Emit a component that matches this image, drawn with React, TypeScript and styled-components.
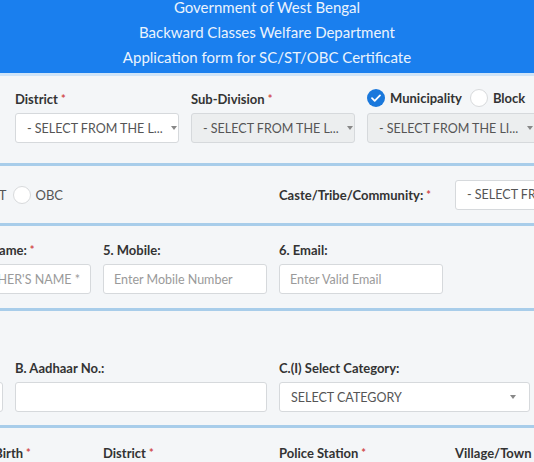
import React from "react";
import styled, { createGlobalStyle } from "styled-components";

const GlobalStyle = createGlobalStyle`
    html, body {
        margin: 0;
        padding: 0;
        background: #f4f6f8;
        font-family: "Lato", "Open Sans", sans-serif;
        overflow: hidden;
    }
`;

const Page = styled.div`
    width: 534px;
    height: 462px;
    overflow: hidden;
    background: #f4f6f8;
`;

const Header = styled.header`
    height: 78px;
    margin-top: -5px;
    background: #1a7fee;
    border-bottom: 3px solid #cfe4f8;
    color: #eaf3fd;
    text-align: center;
    font-size: 15px;
    line-height: 25px;
`;

const Section = styled.section<{ $height: number }>`
    height: ${({ $height }) => $height}px;
    border-bottom: 3px solid #a8cdea;
    box-sizing: border-box;
`;

const Grid = styled.div<{ $top: number; $center?: boolean }>`
    display: grid;
    grid-template-columns: repeat(8, 76px);
    column-gap: 12px;
    margin-left: -73px;
    padding-top: ${({ $top }) => $top}px;
    align-items: ${({ $center }) => ($center ? "center" : "end")};
    height: ${({ $center }) => ($center ? "100%" : "auto")};
    box-sizing: border-box;
`;

const Field = styled.div<{ $span?: number; $col?: number; $end?: boolean }>`
    grid-column: ${({ $col, $span = 2 }) => ($col ? `${$col} / span ${$span}` : `span ${$span}`)};
    display: flex;
    flex-direction: column;
    align-items: ${({ $end }) => ($end ? "flex-end" : "stretch")};
    gap: 6px;
    min-width: 0;
`;

const Label = styled.label`
    font-size: 13px;
    font-weight: 700;
    color: #333;
    line-height: 16px;
    white-space: nowrap;
    display: flex;
    align-items: center;
    gap: 3px;
`;

const Star = styled.span`
    color: #d24b4b;
    font-size: 11px;
`;

const Select = styled.div<{ $disabled?: boolean; $width?: number }>`
    height: 30px;
    width: ${({ $width }) => ($width ? `${$width}px` : "auto")};
    box-sizing: border-box;
    border: 1px solid #d6d9dc;
    border-radius: 3px;
    background: ${({ $disabled }) => ($disabled ? "#eceeef" : "#fff")};
    display: flex;
    align-items: center;
    justify-content: space-between;
    padding: 0 13px 0 11px;
    font-size: 12.5px;
    color: #555;
    white-space: nowrap;
    overflow: hidden;
`;

const Caret = styled.span`
    width: 0;
    height: 0;
    border-left: 3px solid transparent;
    border-right: 3px solid transparent;
    border-top: 4px solid #888;
    flex-shrink: 0;
    margin-left: 8px;
`;

const Input = styled.div<{ $align?: string }>`
    height: 30px;
    box-sizing: border-box;
    border: 1px solid #d6d9dc;
    border-radius: 3px;
    background: #fff;
    display: flex;
    align-items: center;
    justify-content: ${({ $align }) => $align || "flex-start"};
    padding: 0 10px;
    font-size: 12.5px;
    color: #9a9a9a;
    white-space: nowrap;
    overflow: hidden;
`;

const RadioGroup = styled.div<{ $pad?: number }>`
    display: flex;
    align-items: center;
    gap: 5px;
    font-size: 13px;
    color: #555;
    white-space: nowrap;
    padding-right: ${({ $pad = 0 }) => $pad}px;
`;

const RadioText = styled.span<{ $bold?: boolean }>`
    font-weight: ${({ $bold }) => ($bold ? 700 : 400)};
    color: ${({ $bold }) => ($bold ? "#333" : "#555")};
    margin-right: ${({ $bold }) => ($bold ? 3 : 1)}px;
`;

const Circle = styled.span`
    width: 18px;
    height: 18px;
    border-radius: 50%;
    border: 1px solid #d8dadc;
    background: #fff;
    box-sizing: border-box;
    display: inline-block;
`;

const Checked = () => (
    <svg width="18" height="18" viewBox="0 0 18 18">
        <circle cx="9" cy="9" r="9" fill="#1a78dc" />
        <path d="M5 9.2l2.7 2.6L13 6.4" stroke="#fff" strokeWidth="1.8" fill="none" strokeLinecap="round" strokeLinejoin="round" />
    </svg>
);

const Req = ({ children }: { children: React.ReactNode }) => (
    <Label>
        {children}
        <Star>*</Star>
    </Label>
);

const SelectBox = ({ text, disabled, width }: { text: string; disabled?: boolean; width?: number }) => (
    <Select $disabled={disabled} $width={width}>
        <span>{text}</span>
        <Caret />
    </Select>
);

const App: React.FC = () => {
    return (
        <Page>
            <GlobalStyle />
            <Header>
                <div>Government of West Bengal</div>
                <div>Backward Classes Welfare Department</div>
                <div>Application form for SC/ST/OBC Certificate</div>
            </Header>

            <Section $height={90}>
                <Grid $top={13}>
                    <Field $col={2}>
                        <Req>District</Req>
                        <SelectBox text="- SELECT FROM THE L..." />
                    </Field>
                    <Field>
                        <Req>Sub-Division</Req>
                        <SelectBox text="- SELECT FROM THE L..." disabled />
                    </Field>
                    <Field $span={3}>
                        <RadioGroup>
                            <Checked />
                            <RadioText $bold>Municipality</RadioText>
                            <Circle />
                            <RadioText $bold>Block</RadioText>
                        </RadioGroup>
                        <SelectBox text="- SELECT FROM THE LI..." disabled width={180} />
                    </Field>
                </Grid>
            </Section>

            <Section $height={60}>
                <Grid $top={0} $center>
                    <Field $col={1} $end>
                        <RadioGroup $pad={27}>
                            <RadioText>SC</RadioText>
                            <Circle />
                            <RadioText>ST</RadioText>
                            <Circle />
                            <RadioText>OBC</RadioText>
                        </RadioGroup>
                    </Field>
                    <Field $col={5}>
                        <Req>Caste/Tribe/Community:</Req>
                    </Field>
                    <Field>
                        <SelectBox text="- SELECT FROM THE LIST -" />
                    </Field>
                </Grid>
            </Section>

            <Section $height={85}>
                <Grid $top={16}>
                    <Field $col={1}>
                        <Req>4. Father's Name:</Req>
                        <Input $align="flex-end">FATHER'S NAME *</Input>
                    </Field>
                    <Field>
                        <Label>5. Mobile:</Label>
                        <Input>Enter Mobile Number</Input>
                    </Field>
                    <Field>
                        <Label>6. Email:</Label>
                        <Input>Enter Valid Email</Input>
                    </Field>
                </Grid>
            </Section>

            <Section $height={117}>
                <Grid $top={49}>
                    <Field $col={1} $span={1}>
                        <Label>&nbsp;</Label>
                        <Input />
                    </Field>
                    <Field $span={3}>
                        <Label>B. Aadhaar No.:</Label>
                        <Input />
                    </Field>
                    <Field $col={5} $span={3}>
                        <Label>C.(I) Select Category:</Label>
                        <SelectBox text="SELECT CATEGORY" width={251} />
                    </Field>
                </Grid>
            </Section>

            <Grid $top={17}>
                <Field $col={1}>
                    <Req>10. Date of Birth</Req>
                </Field>
                <Field>
                    <Req>District</Req>
                </Field>
                <Field>
                    <Req>Police Station</Req>
                </Field>
                <Field>
                    <Req>Village/Town</Req>
                </Field>
            </Grid>
        </Page>
    );
};

export default App;
